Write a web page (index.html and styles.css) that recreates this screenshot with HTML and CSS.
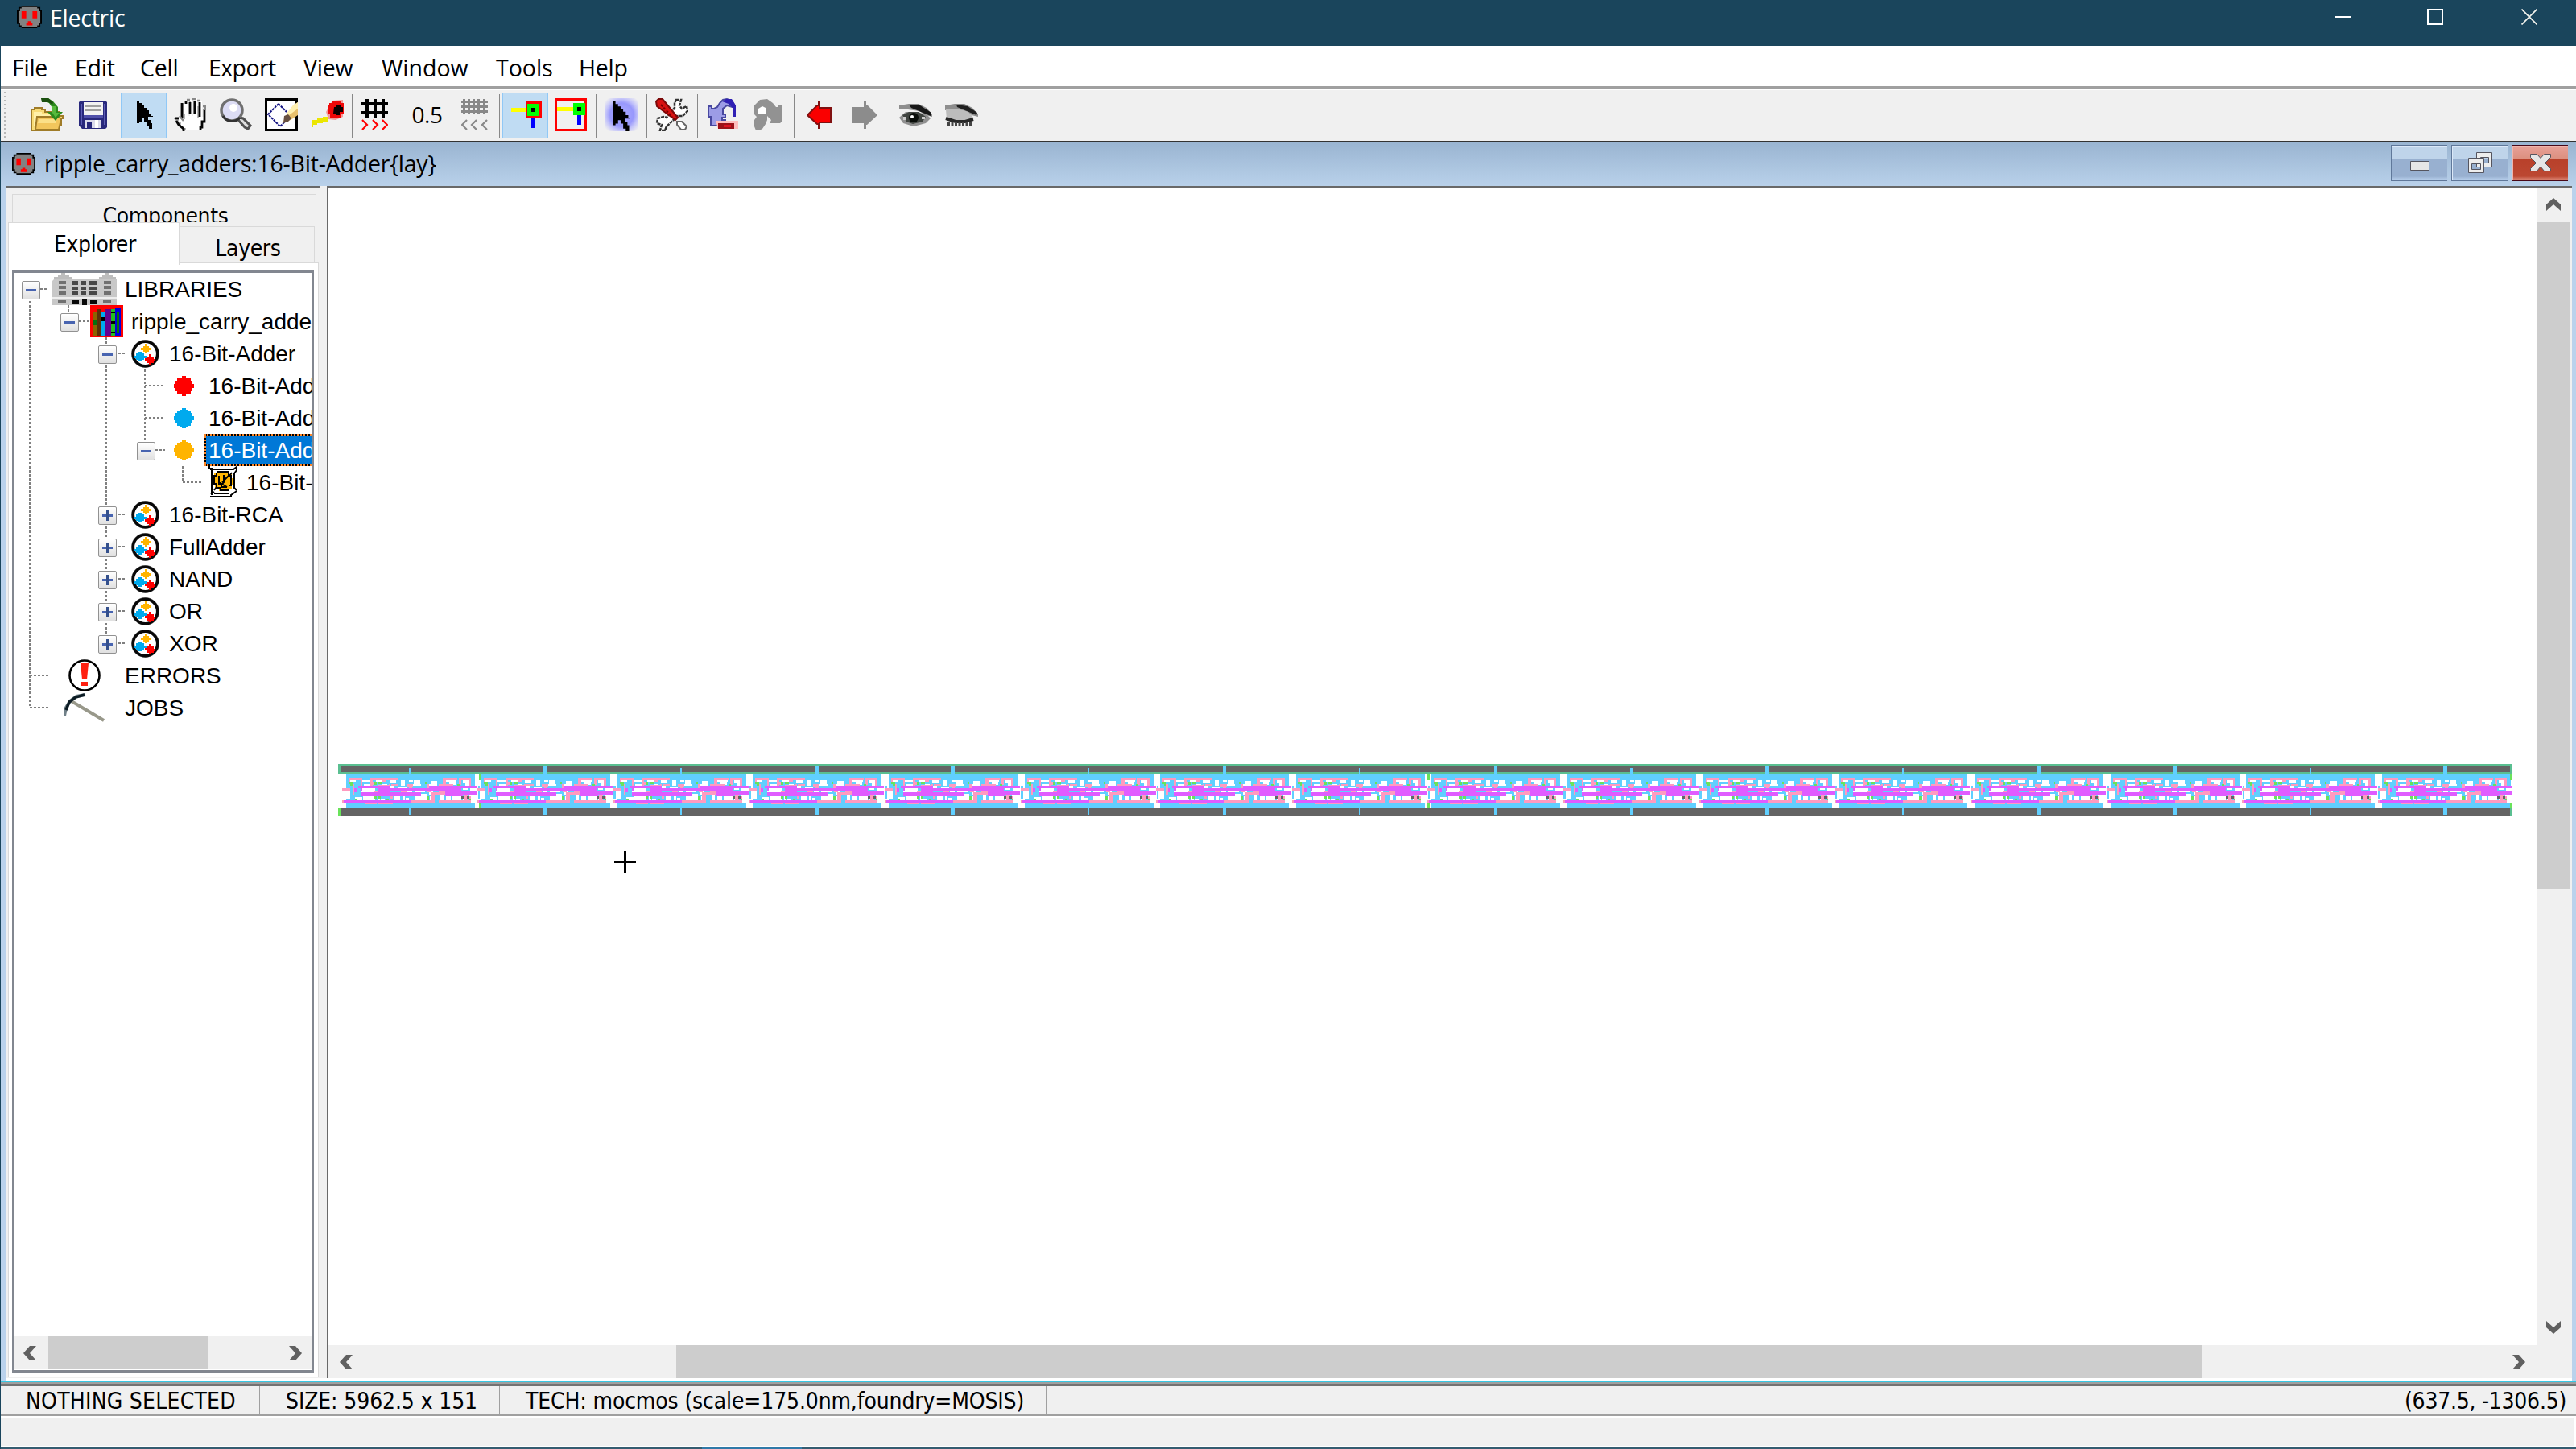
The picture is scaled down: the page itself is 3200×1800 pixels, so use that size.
FILE: index.html
```html
<!DOCTYPE html>
<html lang="en">
<head>
<meta charset="utf-8">
<title>Electric</title>
<link rel="stylesheet" href="styles.css">
</head>
<body>
<svg class="defs" width="0" height="0">
  <defs>
    <symbol id="outlet" viewBox="0 0 16 16" preserveAspectRatio="none">
      <path d="M3 0h10v1h2v2h1v10h-1v2h-2v1H3v-1H1v-2H0V3h1V1h2z" fill="#000"/>
      <path d="M3 1h10v1h1v2h1v8h-1v2h-1v1H3v-1H2v-2H1V4h1V2h1z" fill="#828282"/>
      <path d="M3 4h3v5H3zM10 4h3v5h-3zM7 11h2v1h1v2H6v-2h1z" fill="#f00"/>
    </symbol>
    <symbol id="cell" viewBox="0 0 35 35">
      <circle cx="17.5" cy="17.5" r="16" fill="#fff" stroke="#8a8a8a" stroke-width="3"/>
      <circle cx="17.5" cy="17.5" r="15.2" fill="#fff" stroke="#080808" stroke-width="3.6"/>
      <path d="M17 5h3v3h2v2h3v3h-3v2h-2v2h-3v-2h-2v-2h-3v-3h3V8h2z" fill="#ffb400"/>
      <path d="M9 15h4v2h3v3h3v3h-3v2h-3v2H9v-2H6v-2H4v-3h2v-3h3z" fill="#00aaee"/>
      <path d="M22 18h3v3h3v3h2v3h-2v2h-3v2h-3v-2h-3v-3h-2v-3h3v-2h2z" fill="#f00"/>
    </symbol>
    <symbol id="dot" viewBox="0 0 25 25">
      <path d="M10 0h5v2h3v1h3v3h2v4h2v5h-2v4h-2v3h-3v1h-3v2h-5v-2H7v-1H4v-3H2v-4H0v-5h2V6h2V3h3V2h3z" fill="currentColor"/>
    </symbol>
    <symbol id="cursor" viewBox="0 0 20 35">
      <path d="M0 0h3v3h3v3h3v3h3v3h3v4h3v3h2v1h-6v4h3v4h2v7h-4v-3h-3v-6h-3v-4H6v4H3v2H0z" fill="#000"/>
    </symbol>
    <symbol id="slice" viewBox="0 0 178 65" overflow="visible">
      <path fill="#60cfff" d="M10 13h160v42H10zM174 28h3v16h-3z"/>
      <path fill="#fff" d="M8 20h2v28H8zM10 30h5v13h-5zM15 20h7v2h-7zM30 20h10v3H30zM32 25h8v3h-8zM47 20h8v3h-8zM55 25h6v3h-6zM64 20h8v4h-8zM78 20h5v8h-5zM88 20h5v3h-5zM93 25h10v3H93zM94 20h8v5h-8zM113 25h3v5h-3zM115 21h8v8h-8zM134 20h13v3h-13zM138 23h8v3h-8zM155 20h8v4h-8zM158 24h5v4h-5zM28 30h18v5H28zM35 25h3v10h-3zM65 28h5v2h-5zM75 29h10v4H75zM86 30h6v5h-6zM95 32h13v3H95zM103 37h7v8h-7zM113 33h5v5h-5zM21 41h9v4h-9zM31 40h15v8H31zM49 40h3v8h-3zM53 43h5v3h-5zM70 40h7v8h-7zM80 40h3v5h-3zM84 42h4v6h-4zM95 40h13v8H95zM114 40h6v8h-6zM127 39h4v6h-4zM134 40h6v5h-6zM142 40h11v5h-11zM155 40h3v8h-3zM163 38h7v10h-7zM148 30h5v4h-5zM155 29h6v3h-6zM164 28h6v5h-6z"/>
      <path fill="#ff9abf" d="M13 18h17v2H13zM13 20h2v5h-2zM28 20h2v8h-2zM40 18h35v2H40zM40 20h3v8h-3zM43 23h3v3h-3zM55 20h5v3h-5zM63 25h2v4h-2zM66 25h9v3h-9zM50 26h15v4H50zM85 25h8v4h-8zM88 29h4v3h-4zM5 30h10v3H5zM18 25h2v13h-2zM33 35h5v3h-5zM45 33h5v3h-5zM110 25h3v6h-3zM111 33h5v2h-5zM130 18h18v2h-18zM130 20h4v6h-4zM125 25h18v3h-18zM150 18h15v2h-15zM150 20h3v6h-3zM162 20h3v9h-3zM125 33h18v3h-18zM115 35h25v3h-25zM115 37h5v11h-5zM148 27h4v6h-4zM65 35h3v9h-3zM78 33h7v3h-7zM156 37h5v11h-5zM90 45h30v3H90zM125 45h40v3h-40zM163 40h2v5h-2zM33 48h15v2H33zM50 48h18v2H50zM5 45h2v3H5z"/>
      <path fill="#e05cff" d="M25 28h40v2H25zM113 28h60v2h-60zM28 30h2v3h-2zM50 30h90v3H50zM50 30h15v6H50zM137 30h16v5h-16zM28 35h75v5H28zM133 35h22v5h-22zM133 33h40v5h-40zM7 45h83v3H7zM20 30h3v5h-3z"/>
      <path fill="#69e35a" d="M13 23h5v2h-5zM15 25h3v2h-3zM45 23h3v3h-3zM50 23h5v2h-5zM108 23h2v2h-2zM45 40h3v3h-3zM50 40h3v3h-3zM110 40h3v5h-3zM21 43h3v2h-3zM60 43h3v2h-3zM163 43h2v2h-2zM148 25h3v3h-3z"/>
      <path fill="#646464" d="M153 40h3v3h-3zM160 40h3v3h-3z"/>
    </symbol>
  </defs>
</svg>

<div class="window">
  <header class="titlebar">
    <svg class="app-icon" width="31" height="28"><use href="#outlet" width="31" height="28"/></svg>
    <h1 class="app-title">Electric</h1>
    <div class="caption-buttons">
      <svg width="20" height="20" viewBox="0 0 20 20"><path d="M0 9h20v2H0z" fill="#fff"/></svg>
      <svg width="20" height="20" viewBox="0 0 20 20"><path d="M1 1h18v18H1z" fill="none" stroke="#fff" stroke-width="2"/></svg>
      <svg width="20" height="20" viewBox="0 0 20 20"><path d="M.5.5l19 19M19.500.5l-19 19" stroke="#f4f4ee" stroke-width="1.700"/></svg>
    </div>
  </header>

  <nav class="menubar">
    <span class="menu-file">File</span><span class="menu-edit">Edit</span><span class="menu-cell">Cell</span><span class="menu-export">Export</span><span class="menu-view">View</span><span class="menu-window">Window</span><span class="menu-tools">Tools</span><span>Help</span>
  </nav>

  <div class="toolbar">
    <span class="grip"></span>
    <button class="tool"><svg width="41" height="41" viewBox="0 0 41 41">
      <path d="M1 14h4v-2h9v2h4v3h17v5h5v3h-2v8h-3v7H1z" fill="#f8dc78" stroke="#a07c28" stroke-width="2"/>
      <path d="M4 17h10v2h12v4H9v4H7v8H4z" fill="#fff0a8"/>
      <path d="M8 23h27l3 3-3 13H6z" fill="#f2c65c" stroke="#a07c28" stroke-width="2"/><path d="M10 26h22v5H9z" fill="#fbe088"/>
      <path d="M13 0h9l6 4 6 7v6h6l-9 11-10-11h6v-5l-4-6-9-4z" fill="#2c8a1c"/><path d="M27 10h5v8h4l-5 6-4-6z" fill="#58b93c"/><path d="M13 0h9l6 5-1 3-5-3h-8z" fill="#1c5010"/>
    </svg></button>
    <button class="tool"><svg width="35" height="35" viewBox="0 0 35 35">
      <path d="M2 0h31l2 2v31l-2 2H4l-4-4V2z" fill="#28287c"/><path d="M2 4h2v26H2zM31 4h2v26h-2z" fill="#5c5cb4"/>
      <path d="M6 2h24v16H6z" fill="#f2f2f2"/><path d="M7 5h20v3H7zM7 10h20v3H7z" fill="#a0a0a0"/><path d="M6 18h24v3H6z" fill="#5050aa"/>
      <path d="M7 24h20v10H7z" fill="#dadaec"/><path d="M10 26h6v8h-6z" fill="#28287c"/><path d="M20 24h4v10h-4z" fill="#fff"/>
    </svg></button>
    <i class="sep"></i>
    <button class="tool on"><svg class="tool-cursor" width="20" height="35"><use href="#cursor"/></svg></button>
    <button class="tool"><svg width="41" height="41" viewBox="0 0 41 41">
      <path d="M2 24h6l4 5V6h3V3h3v19h3V2h3v20h1V0h5v21h2V4h4v19h2V11h4v18l-4 4v5l-2 2H13v-3L3 28z" fill="#fff"/>
      <path d="M1 25h3M3 28h3v3h3v4h3v3h4M10 7h3v18M14 26v-6M21 4v16M26 4v16M31 10v14" fill="none" stroke="#b8b8b8" stroke-width="2"/>
      <path d="M11 6v18M16 4v3M21 5v15M27 3v17M33 5v18M39 13v16h-3v7h-2v4M2 25h5M4 28l3 5 6 5v3" fill="none" stroke="#050505" stroke-width="2.800"/>
      <path d="M17 2h4M24 1h4M30 3h4M37 10h3v5M8 22l5 6" fill="none" stroke="#888" stroke-width="2.500"/>
    </svg></button>
    <button class="tool"><svg width="41" height="41" viewBox="0 0 41 41">
      <path d="M25 24l5 1 9 9-3 4-4-2-8-9z" fill="#ddd" stroke="#505050" stroke-width="3"/>
      <circle cx="16" cy="15" r="13" fill="#dcdcf4" stroke="#707070" stroke-width="3.500"/><path d="M5 22a13 13 0 0 0 21 2" fill="none" stroke="#333" stroke-width="3"/><circle cx="18" cy="12" r="5" fill="#fff"/>
    </svg></button>
    <button class="tool"><svg width="41" height="41" viewBox="0 0 41 41">
      <path d="M1.500 1.500h38v38h-38z" fill="#fff" stroke="#000" stroke-width="3"/>
      <path d="M17 7L4 20l15 15L31 23M17 7l10 10" fill="none" stroke="#101080" stroke-width="2" stroke-dasharray="3 1"/>
      <path d="M41 5v16l-9 6-9 2 4-9 9-12z" fill="#e8c06c"/><path d="M41 5v8L30 21l-4-1 9-11z" fill="#fff0b0"/><path d="M23 31l1-9 5-2 4 5-4 4z" fill="#685040"/>
    </svg></button>
    <button class="tool"><svg width="41" height="41" viewBox="0 0 41 41">
      <path d="M1 27h7v-2h7v-2h6v6h-6v2H8v2H3v3H1z" fill="#ebe600"/><path d="M19 17l8-14 13-1v21l-9 4-9-1z" fill="#f29a9a"/>
      <path d="M23 6h3V3h11v3h4v13h-3v5H24v-4h-3V9h2z" fill="#f00808"/><path d="M29 11h3V8h6v3h2v6h-4v4h-5v-2h-3z" fill="#0c0000"/>
    </svg></button>
    <i class="sep"></i>
    <button class="tool tool-grid"><svg width="33" height="39" viewBox="0 0 33 39">
      <path d="M0 4h33v3H0zM0 15h33v3H0zM5 0h4v23H5zM15 0h4v23h-4zM25 0h4v23h-4z" fill="#000"/>
      <path d="M1 26l6 6-6 6M14 26l6 6-6 6M26 26l6 6-6 6" fill="none" stroke="#f00" stroke-width="2.200"/>
    </svg></button>
    <span class="grid-size">0.5</span>
    <button class="tool"><svg width="33" height="39" viewBox="0 0 33 39">
      <path d="M0 2h33v3H0zM0 8h33v3H0zM0 14h33v3H0zM2 0h3v18H2zM8 0h3v18H8zM14 0h3v18h-3zM20 0h3v18h-3zM27 0h3v18h-3z" fill="#888"/>
      <path d="M7 26l-6 6 6 6M19 26l-6 6 6 6M32 26l-6 6 6 6" fill="none" stroke="#888" stroke-width="2.200"/>
    </svg></button>
    <i class="sep"></i>
    <button class="tool on"><svg class="tool-port" width="38" height="33" viewBox="0 0 38 33">
      <path d="M0 8h20v5H0z" fill="#ff0"/><path d="M25 20h5v13h-5z" fill="#00f"/><path d="M18 0h20v20H18z" fill="#f00"/><path d="M20 3h15v15H20z" fill="#0f0"/><path d="M25 8h5v5h-5z" fill="#000"/>
    </svg></button>
    <button class="tool"><svg width="40" height="41" viewBox="0 0 40 41">
      <path d="M1.500 1.500h37v38h-37z" fill="#f0f0f0" stroke="#f00" stroke-width="3"/><path d="M3 11h20v5H3z" fill="#ff0"/><path d="M28 20h5v13h-5z" fill="#00f"/><path d="M23 6h15v15H23z" fill="#0f0"/><path d="M28 11h5v5h-5z" fill="#000"/>
    </svg></button>
    <i class="sep"></i>
    <button class="tool"><span class="glow"><svg width="22" height="37" viewBox="0 0 20 35"><use href="#cursor" width="20" height="35"/></svg></span></button>
    <i class="sep"></i>
    <button class="tool"><svg width="41" height="41" viewBox="0 0 41 41">
      <path d="M26 2h6l-2 7 3 4 6-3 1 6-6 6h-6L14 35l-2 5H6l2-7-6-2 1-6 7-2 4 1L24 12V6z" fill="#fff" stroke="#333" stroke-width="2.500" stroke-dasharray="4 1"/>
      <path d="M1 4l3-3h5l19 23-3 3L2 10z" fill="#d81010" stroke="#7c0808" stroke-width="2"/><path d="M7 8l14 15" stroke="#700" stroke-width="2" stroke-dasharray="3 2"/>
      <path d="M27 29h6l6 6-2 4h-5l-5-6z" fill="#fff" stroke="#666" stroke-width="2"/>
    </svg></button>
    <i class="sep"></i>
    <button class="tool"><svg width="38" height="41" viewBox="0 0 38 41">
      <path d="M1 10h4v3h3l4-2 3-5 4-4 5-1 6 2 3 5-2 3-7-2-5 4v7h3v4h-4v3h4v4h-7v3H4V23H1z" fill="#9c9ce6" stroke="#4848a0" stroke-width="2"/><path d="M18 4l5-3h7l5 8v14h-3V13l-6-6z" fill="#3020b4"/>
      <path d="M10 28h28v10H13z" fill="#ffbcbc"/><path d="M13 31h20v7H13z" fill="#9c1018"/><path d="M20 33h9v3h-9z" fill="#e01020"/>
    </svg></button>
    <button class="tool"><svg width="36" height="41" viewBox="0 0 36 41">
      <path d="M0 20V9l7-7 9-1 7 5 4 5h3V9h5v19l-3 3H19l2-4-5-5v5l-2 5-4 6-4 2H2l-2-5v-8l3-4z" fill="#929292"/><path d="M5 13l5-3 4 2 1 8H5z" fill="#fff"/>
    </svg></button>
    <i class="sep"></i>
    <button class="tool"><svg width="31" height="34" viewBox="0 0 31 34"><path d="M1 17L13 5h2V1h1v7h14v18H16v7h-1v-5h-2z" fill="#fa0000" stroke="#801010" stroke-width="2"/></svg></button>
    <button class="tool"><svg width="31" height="34" viewBox="0 0 31 34"><path d="M31 17L18 4h-1V0h-3v7H0v20h14v7h3v-5h1z" fill="#8c8c8c"/></svg></button>
    <i class="sep"></i>
    <button class="tool"><svg class="eye" width="41" height="28" viewBox="0 0 41 28">
      <path d="M0 2l12-2h12l10 5 7 8v3l-8-2-8-5-14-2L0 7z" fill="#8e8e8e"/><path d="M12 1l14 1 14 9-1 4-12-5-12-5z" fill="#181818"/>
      <path d="M0 17l8-7h14l12 3 5 5-6 6-15 4-13-4z" fill="#909090"/><path d="M4 14l8-4h12l9 6-4 6-12 3-8-3z" fill="#404440"/><circle cx="18" cy="17" r="6" fill="#080c08"/><circle cx="16" cy="16" r="2" fill="#fff"/><path d="M5 16h4v4H5zM28 16h4v3h-4z" fill="#ccc"/>
    </svg></button>
    <button class="tool"><svg class="eye" width="41" height="28" viewBox="0 0 41 28">
      <path d="M0 2l12-2h12l10 5 7 8v3l-8-2-8-5-14-2L0 8z" fill="#8e8e8e"/><path d="M14 1l14 2 12 8-1 3-12-5-12-5z" fill="#202020"/>
      <path d="M1 7l14-1 14 4 7 8-16 5L2 20z" fill="#bcbcbc"/><path d="M1 18l12 4h12l10-3" fill="none" stroke="#282828" stroke-width="4"/><path d="M3 25h31" stroke="#444" stroke-width="5" stroke-dasharray="3 1.500"/>
    </svg></button>
  </div>

  <section class="cell-window">
    <header class="cell-title">
      <svg class="cell-icon" width="29" height="27"><use href="#outlet" width="29" height="27"/></svg>
      <h2>ripple_carry_adders:16-Bit-Adder{lay}</h2>
      <div class="frame-buttons">
        <span class="frame-button"><svg width="70" height="45" viewBox="0 0 70 45"><path d="M24.500 20.500h23v11h-23z" fill="#e6e6e6" stroke="#55555f"/></svg></span>
        <span class="frame-button"><svg width="70" height="45" viewBox="0 0 70 45"><path d="M31.500 9.500h19v18h-19zM36.500 15.500v7h10v-7z" fill="#eee" stroke="#55555f" fill-rule="evenodd"/><path d="M21.500 16.500h19v18h-19zM25.500 23.500v7h11v-7z" fill="#eee" stroke="#55555f" fill-rule="evenodd"/></svg></span>
        <span class="frame-button frame-close"><svg width="70" height="45" viewBox="0 0 70 45"><path d="M23.500 11.500h8l4.500 5 4.500-5h8v4l-7 7 7 7v3h-8L36 27l-4.500 5.500h-8v-3l7-7-7-7z" fill="#e6e6e6" stroke="#55555f"/></svg></span>
      </div>
    </header>

    <div class="workspace">
      <aside class="sidebar">
        <div class="tab tab-components">Components</div>
        <div class="tab-row">
          <div class="tab tab-explorer">Explorer</div>
          <div class="tab tab-layers">Layers</div>
        </div>
        <div class="pane">
          <div class="tree-box">
            <div class="tree">
              <svg class="tree-lines" width="370" height="560" viewBox="17 340 370 560">
                <path d="M37 375V880H60M37 840H60M50 360H60M85 380V390M98 400H110M132 420V790M147 440h8M180 460V550M180 480H205M180 520H205M193 560H205M227 580V600H250M147 640h8M147 680h8M147 720h8M147 760h8M147 800h8" fill="none" stroke="#808080" stroke-width="2" stroke-dasharray="3 2"/>
              </svg>
              <div class="row level-0"><i class="toggle minus"></i><span class="slot"><svg width="80" height="40" viewBox="0 0 80 40">
                <path d="M2 8h78v32H0V10z" fill="#c8c8c8"/><path d="M2 8V5h5V2h4V0h5v2h5v3h3v3zM58 8V5h4V2h4V0h4v2h5v3h4v3z" fill="#bdbdbd"/><path d="M0 30h80v3H0z" fill="#eee"/>
                <path d="M8 10h9v4H8zM8 16h9v4H8zM8 23h9v5H8zM64 10h9v4h-9zM64 16h9v4h-9zM64 23h9v5h-9zM7 34h10v4H7zM63 34h10v4H63z" fill="#707070"/>
                <path d="M25 10h7v5h-7zM35 10h7v5h-7zM45 10h10v5H45zM25 17h7v4h-7zM35 17h7v4h-7zM45 17h10v4H45zM25 23h7v5h-7zM35 23h7v5h-7zM45 23h10v5H45z" fill="#484848"/><path d="M25 34h8v5h-8zM37 33h6v7h-6zM47 34h8v5h-8z" fill="#080808"/>
              </svg></span><span class="label">LIBRARIES</span></div>
              <div class="row level-1"><i class="toggle minus"></i><span class="slot"><svg width="41" height="40" viewBox="0 0 41 40">
                <path d="M0 0h41v40H0z" fill="#f00"/><path d="M3 8h5v30H3z" fill="#8c6400"/><path d="M3 18h5v7H3z" fill="#087010"/><path d="M8 5h5v33H8z" fill="#5c3008"/><path d="M13 8h5v30h-5z" fill="#00aaee"/><path d="M13 15h5v5h-5z" fill="#000"/><path d="M18 5h8v33h-8z" fill="#640090"/><path d="M26 5h5v33h-5z" fill="#20c020"/><path d="M26 8h5v2h-5zM26 20h5v3h-5zM26 33h5v2h-5z" fill="#000"/><path d="M31 3h7v35h-7z" fill="#0000dc"/><path d="M33 8h3v27h-3z" fill="#087010"/>
              </svg></span><span class="label">ripple_carry_adders</span></div>
              <div class="row level-2"><i class="toggle minus"></i><span class="slot"><svg width="35" height="35"><use href="#cell"/></svg></span><span class="label">16-Bit-Adder</span></div>
              <div class="row level-3"><i class="toggle leaf"></i><span class="slot"><svg class="view-schematic" width="25" height="25"><use href="#dot"/></svg></span><span class="label">16-Bit-Adder{sch}</span></div>
              <div class="row level-3"><i class="toggle leaf"></i><span class="slot"><svg class="view-icon" width="25" height="25"><use href="#dot"/></svg></span><span class="label">16-Bit-Adder{ic}</span></div>
              <div class="row level-3"><i class="toggle minus"></i><span class="slot"><svg class="view-layout" width="25" height="25"><use href="#dot"/></svg></span><span class="label selected">16-Bit-Adder{lay}</span></div>
              <div class="row level-4"><span class="slot"><svg width="38" height="40" viewBox="0 0 38 40">
                <path d="M8 9h4V6h14v4h4v5h3v8h-3v5h-5v3H14v-3H9v-5H5v-6h3z" fill="#ffb400"/>
                <path d="M1 3h4v33M0 1h3M4 35l4-3M3 38h26M8 34h19M29 39v-3l7-5M3 4h29l4-3v4l-3 4v18l3 3M12 7h14M11 8v4H8v10h3v5h5v3h10M26 8v4h3v12h-3M14 12v10h3v4h7M20 11v9l-4 4M26 12l-8 8M14 20l10 6M30 8l-3 4M8 30l3-4" fill="none" stroke="#000" stroke-width="2"/>
              </svg></span><span class="label">16-Bit-Adder{lay}</span></div>
              <div class="row level-2"><i class="toggle plus"></i><span class="slot"><svg width="35" height="35"><use href="#cell"/></svg></span><span class="label">16-Bit-RCA</span></div>
              <div class="row level-2"><i class="toggle plus"></i><span class="slot"><svg width="35" height="35"><use href="#cell"/></svg></span><span class="label">FullAdder</span></div>
              <div class="row level-2"><i class="toggle plus"></i><span class="slot"><svg width="35" height="35"><use href="#cell"/></svg></span><span class="label">NAND</span></div>
              <div class="row level-2"><i class="toggle plus"></i><span class="slot"><svg width="35" height="35"><use href="#cell"/></svg></span><span class="label">OR</span></div>
              <div class="row level-2"><i class="toggle plus"></i><span class="slot"><svg width="35" height="35"><use href="#cell"/></svg></span><span class="label">XOR</span></div>
              <div class="row level-0"><i class="toggle leaf"></i><span class="slot"><svg width="40" height="40" viewBox="0 0 40 40">
                <circle cx="20" cy="20" r="18.500" fill="#fff" stroke="#000" stroke-width="2.600"/><path d="M15 5h10l-2 20h-6z" fill="#ff2010"/><path d="M16 28h8v5h-8z" fill="#ff2010"/>
              </svg></span><span class="label">ERRORS</span></div>
              <div class="row level-0"><i class="toggle leaf"></i><span class="slot"><svg width="52" height="40" viewBox="0 0 52 40">
                <path d="M8 11l42 25" stroke="#98988a" stroke-width="4"/><path d="M27 4l-11 2L8 12 3 20 1 30" fill="none" stroke="#708088" stroke-width="4"/><path d="M26 4l-11 3-8 6-4 10" fill="none" stroke="#0c1c24" stroke-width="3.500"/>
              </svg></span><span class="label">JOBS</span></div>
            </div>
            <div class="hscroll sidebar-scroll">
              <svg class="arrow-left" width="16" height="18" viewBox="0 0 16 18"><path d="M8 0h8L8 9l8 9H8L0 9z"/></svg>
              <i class="thumb"></i>
              <svg class="arrow-right" width="16" height="18" viewBox="0 0 16 18"><path d="M8 0H0l8 9-8 9h8l8-9z"/></svg>
            </div>
          </div>
        </div>
      </aside>

      <main class="editor">
        <div class="canvas">
          <svg class="layout" width="2700" height="65" viewBox="0 0 2700 65">
            <path d="M0 0h2700v13H0z" fill="#5abf91"/><path d="M3 3h2695v7H3zM3 55h2695v10H3z" fill="#646464"/><path d="M0 55h3v10H0z" fill="#69e35a"/><path d="M2698 55h2v10h-2z" fill="#5abf91"/>
            <use href="#slice" x="0" width="178" height="65"/><use href="#slice" x="168" width="178" height="65"/><use href="#slice" x="337" width="178" height="65"/><use href="#slice" x="505" width="178" height="65"/>
            <use href="#slice" x="674" width="178" height="65"/><use href="#slice" x="843" width="178" height="65"/><use href="#slice" x="1011" width="178" height="65"/><use href="#slice" x="1180" width="178" height="65"/>
            <use href="#slice" x="1348" width="178" height="65"/><use href="#slice" x="1517" width="178" height="65"/><use href="#slice" x="1686" width="178" height="65"/><use href="#slice" x="1854" width="178" height="65"/>
            <use href="#slice" x="2023" width="178" height="65"/><use href="#slice" x="2192" width="178" height="65"/><use href="#slice" x="2360" width="178" height="65"/><use href="#slice" x="2529" width="178" height="65"/>
            <path d="M88 5h2v8h-2zM88 55h2v8h-2zM255 3h5v10h-5zM255 55h5v8h-5zM425 5h2v8h-2zM425 55h2v8h-2zM593 3h4v10h-4zM593 55h4v8h-4zM761 3h5v10h-5zM761 55h5v8h-5zM931 5h2v8h-2zM931 55h2v8h-2zM1099 3h4v10h-4zM1099 55h4v8h-4zM1268 5h2v8h-2zM1268 55h2v8h-2zM1436 3h4v10h-4zM1436 55h4v8h-4zM1605 5h3v8h-3zM1605 55h3v8h-3zM1773 3h4v10h-4zM1773 55h4v8h-4zM1943 5h2v8h-2zM1943 55h2v8h-2zM2111 3h4v10h-4zM2111 55h4v8h-4zM2279 3h5v10h-5zM2279 55h5v8h-5zM2449 5h2v8h-2zM2449 55h2v8h-2zM2615 3h5v10h-5zM2615 55h5v8h-5z" fill="#60cfff"/>
            <path d="M175 13h3v7h-3zM175 48h3v7h-3zM1353 13h3v7h-3zM1353 48h3v7h-3zM2698 13h2v7h-2zM2698 48h2v7h-2z" fill="#69e35a"/>
          </svg>
          <svg class="crosshair" width="27" height="27" viewBox="0 0 27 27"><path d="M12 0h3v27h-3zM0 12h27v3H0z"/></svg>
        </div>
        <div class="vscroll">
          <svg class="arrow-up" width="18" height="16" viewBox="0 0 18 16"><path d="M0 8v8l9-8 9 8V8L9 0z"/></svg>
          <i class="thumb"></i>
          <svg class="arrow-down" width="18" height="16" viewBox="0 0 18 16"><path d="M0 8V0l9 8 9-8v8l-9 8z"/></svg>
        </div>
        <div class="hscroll editor-scroll">
          <svg class="arrow-left" width="16" height="18" viewBox="0 0 16 18"><path d="M8 0h8L8 9l8 9H8L0 9z"/></svg>
          <i class="thumb"></i>
          <svg class="arrow-right" width="16" height="18" viewBox="0 0 16 18"><path d="M8 0H0l8 9-8 9h8l8-9z"/></svg>
        </div>
      </main>
    </div>
  </section>

  <footer class="statusbar">
    <span class="status-selection">NOTHING SELECTED</span>
    <span class="status-size">SIZE: 5962.5 x 151</span>
    <span class="status-tech">TECH: mocmos (scale=175.0nm,foundry=MOSIS)</span>
    <span class="status-coords">(637.5, -1306.5)</span>
  </footer>
  <div class="message-strip"></div>
  <div class="desktop-edge"><i class="desktop-active"></i></div>
</div>
</body>
</html>
```
FILE: styles.css
```css
* { box-sizing: border-box; }
body { margin: 0; width: 3200px; height: 1800px; overflow: hidden; color: #000; font-family: "DejaVu Sans Condensed", "DejaVu Sans", sans-serif; font-size: 28px; }
svg { display: block; flex: none; }
.defs { position: absolute; }
.window { display: flex; flex-direction: column; width: 3200px; height: 1800px; border-left: 1px solid #1a455c; background: #f0f0f0; white-space: nowrap; }

.titlebar { display: flex; height: 57px; flex: none; background: #1a455c; }
.app-icon { margin: 7px 10px 0 20px; }
.app-title { margin: 0; font: 400 28.5px/45px "Open Sans", sans-serif; letter-spacing: -.25px; color: #fff; }
.caption-buttons { display: flex; gap: 97px; margin: 11px 48px 0 auto; }
.caption-buttons svg:nth-child(2) { margin-left: -2px; }

.menubar { display: flex; height: 55px; flex: none; padding-left: 14px; background: #fff; border-bottom: 2px solid #fff; box-shadow: inset 0 -3px #a0a0a0; font: 28.5px/54px "Open Sans", sans-serif; letter-spacing: -.25px; }
.menu-file { width: 78px; }
.menu-edit { width: 81px; }
.menu-cell { width: 85px; }
.menu-export { width: 118px; letter-spacing: -.6px; }
.menu-view { width: 97px; }
.menu-window { width: 142px; letter-spacing: 0; }
.menu-tools { width: 103px; letter-spacing: 0; }

.toolbar { display: flex; align-items: stretch; height: 64px; flex: none; border-bottom: 1px solid #333; }
.grip { width: 2px; margin: 2px 23px 4px 4px; background: repeating-linear-gradient(#b8b8b8 0 2px, transparent 2px 5px); }
.tool { display: flex; align-items: center; justify-content: center; width: 57px; margin: 3px 0 3px; padding: 0 0 2px; border: 1px solid transparent; background: none; }
.tool.on { background: #c0dcf3; border-color: #90c8f6; }
.tool-grid { width: 50px; }
.tool-cursor { margin-right: -3px; }
.tool-port { margin-left: 3px; }
.sep { width: 5.8px; margin: 5px 0 4px; background: linear-gradient(#888, #888) center / 1px 100% no-repeat; }
.grid-size { width: 70.5px; padding-left: 21px; font: 28px/60px "Open Sans", sans-serif; letter-spacing: -.5px; }
.glow { display: flex; justify-content: center; align-items: flex-end; width: 41px; height: 41px; background: radial-gradient(circle, #a4a4ff 20%, #9898fc 50%, #c4c4fa 68%, #f0f0f0 92%); }

.cell-window { display: flex; flex-direction: column; height: 1541px; flex: none; background: #bad2ec; border-bottom: 2px solid #36c8e4; }
.cell-title { display: flex; height: 56px; background: linear-gradient(#99b4d1, #b9d1ea); }
.cell-icon { margin: 14px 11px 0 14px; }
.cell-title h2 { margin: 0; font: 400 28.5px/54px "Open Sans", sans-serif; letter-spacing: -.2px; }
.frame-buttons { display: flex; gap: 5px; margin: 4px 10px 0 auto; }
.frame-button { width: 70px; height: 45px; border: 1px solid #60789a; border-right: 0; background: linear-gradient(#bfd4ea 0 16px, #98b0d0 16px 38px, #bcd4f0); box-shadow: inset 1px 1px #dbe8f8; }
.frame-button svg { margin: -1px; }
.frame-close { border-color: #480818; background: linear-gradient(#e8a098, #dc9080 16px, #b8402a 16px, #bc4832 38px, #e09080); box-shadow: inset 1px 1px #f0b4ac; }

.workspace { display: flex; flex: 1; margin: 0 5px 0 6px; background: #f0f0f0; border-bottom: 3px solid #fff; }
.sidebar { display: flex; flex-direction: column; width: 391px; margin-right: 8px; padding: 8px 2px 1px 2px; border-top: 2px solid #696969; border-left: 1px solid #888; }
.tab { border: 1px solid #d9d9d9; border-bottom: 0; text-align: center; letter-spacing: -.34px; }
.tab-components { width: 378px; height: 35px; flex: none; margin-left: 5px; padding-left: 3px; overflow: hidden; line-height: 53px; }
.tab-row { display: flex; height: 50px; flex: none; }
.tab-explorer { position: relative; width: 213px; height: 53px; padding-left: 3px; background: #fff; line-height: 53px; }
.tab-layers { width: 168px; height: 45px; margin-top: 5px; padding-left: 3px; line-height: 54px; border-left: 0; }
.pane { display: flex; flex: 1; padding: 9px 5px 5px 4px; border: 1px solid #d9d9d9; background: #fff; }
.tree-box { display: flex; flex-direction: column; width: 375px; border: 3px solid #828790; border-width: 3px 3px 3px 2px; overflow: hidden; }
.tree { position: relative; height: 1321px; flex: none; font-family: "Liberation Sans", Arial, sans-serif; }
.tree-lines { position: absolute; left: 0; top: 0; }
.row { position: relative; display: flex; align-items: center; height: 40px; width: 370px; overflow: hidden; }
.level-0 { padding-left: 10px; }
.level-1 { padding-left: 58px; }
.level-2 { padding-left: 105px; }
.level-3 { padding-left: 153px; }
.level-4 { padding-left: 240px; }
.toggle { width: 23px; height: 23px; flex: none; margin-top: 3px; border: 1px solid #919191; border-radius: 2px; background: linear-gradient(#fff, #e0e0e0); }
.leaf { visibility: hidden; }
.minus { background: linear-gradient(#4864b0, #4864b0) center / 13px 3px no-repeat, linear-gradient(#fff, #e0e0e0); }
.plus { background: linear-gradient(#34508c, #34508c) center / 3px 13px no-repeat, linear-gradient(#4864b0, #4864b0) center / 13px 3px no-repeat, linear-gradient(#fff, #e0e0e0); }
.slot { display: flex; justify-content: center; width: 61px; padding-left: 9px; flex: none; }
.level-0 .slot { width: 101px; padding-left: 9px; }
.level-1 .slot { width: 61px; padding-left: 7px; }
.level-4 .slot { width: 45px; padding: 0 0 0 1px; justify-content: flex-start; }
.label { padding-left: 4px; line-height: 41px; height: 40px; }
.level-3 .label { padding-left: 5px; }
.view-schematic { color: #f00; }
.view-icon { color: #00aaee; }
.view-layout { color: #ffb400; }
.selected { background: #0078d7; color: #fff; outline: 2px dotted #ff8728; outline-offset: -2px; box-shadow: inset 0 0 0 2px #000; }

.hscroll { display: flex; align-items: center; height: 41px; background: #f0f0f0; fill: #606060; }
.thumb { background: #cdcdcd; }
.sidebar-scroll { padding: 0 12px; justify-content: space-between; }
.sidebar-scroll .thumb { width: 198px; height: 41px; margin: 0 101px 0 15px; }

.editor { display: grid; grid-template: 1437px 41px / 2743px 41px; flex: 1; border: 2px solid #696969; border-right: 0; border-bottom: 0; background: #f0f0f0; padding-top: 1px; }
.canvas { position: relative; background: #fff; }
.layout { position: absolute; left: 12px; top: 715px; shape-rendering: crispEdges; }
.crosshair { position: absolute; left: 355px; top: 823px; }
.vscroll { display: flex; flex-direction: column; align-items: center; padding: 12px 0 14px; fill: #606060; }
.vscroll .thumb { width: 41px; height: 828px; margin: 14px 0 auto; }
.editor-scroll { padding: 0 14px; }
.editor-scroll .thumb { width: 1895px; height: 41px; margin: 0 auto 0 402px; }

.statusbar { display: flex; height: 45px; flex: none; padding-top: 3px; border-top: 2px solid #a0a0a0; border-bottom: 3px solid #fff; line-height: 37px; box-shadow: inset 0 3px #737373, inset 0 -2px #a0a0a0; }
.statusbar span { height: 35px; }
.status-selection { width: 322px; padding-left: 31px; letter-spacing: .25px; border-right: 1px solid #a0a0a0; }
.status-size { width: 298px; padding-left: 32px; letter-spacing: -.12px; border-right: 1px solid #a0a0a0; }
.status-tech { width: 680px; padding-left: 32px; letter-spacing: -.14px; border-right: 1px solid #a0a0a0; }
.status-coords { margin-left: auto; padding-right: 12px; letter-spacing: -.25px; }
.message-strip { flex: 1; border-right: 3px solid #fff; border-bottom: 1px solid #fff; }
.desktop-edge { height: 3px; flex: none; background: #345c70; }
.desktop-active { display: block; width: 124px; height: 3px; margin-left: 871px; background: #3079a8; }
```
